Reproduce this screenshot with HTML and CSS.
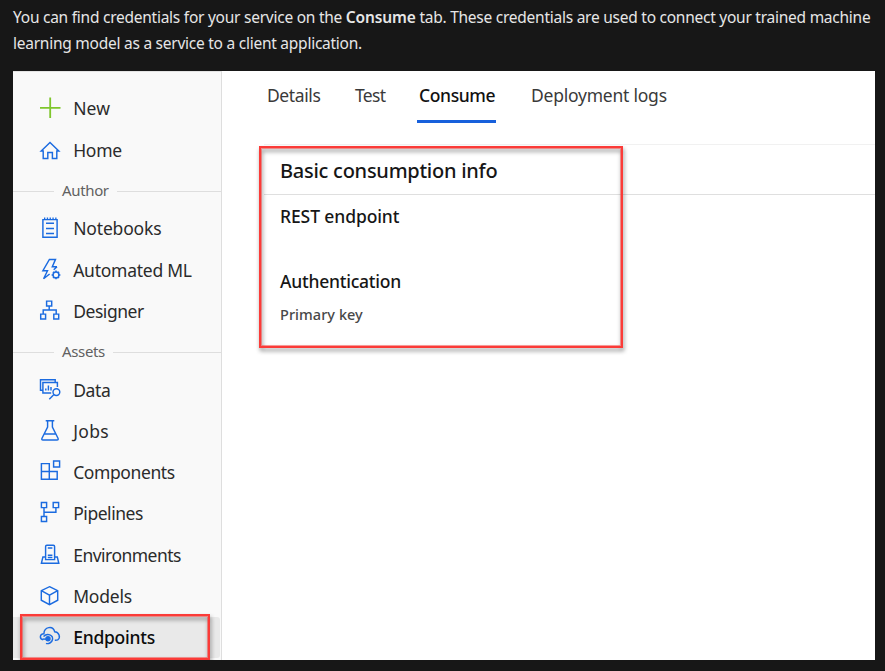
FILE: index.html
```html
<!DOCTYPE html>
<html lang="en">
<head>
<meta charset="utf-8">
<title>Consume credentials</title>
<link rel="stylesheet" href="styles.css">
</head>
<body>
<p class="intro">You can find credentials for your service on the <b>Consume</b> tab. These credentials are used to connect your trained machine<br>learning model as a service to a client application.</p>
<div class="panel">
  <nav class="sidebar">
    <a class="item new"><svg class="plus" viewBox="0 0 24 24"><path d="M12.2 1.5v20.5M2 11.8h20.5"/></svg><span>New</span></a>
    <a class="item home"><svg viewBox="0 0 24 24"><path d="M3.2 13 12 4.6l8.8 8.4h-2v7.5h-4.4v-6H9.8v6H5.2V13z"/></svg><span>Home</span></a>
    <div class="group"><span>Author</span></div>
    <a class="item notebooks"><svg viewBox="0 0 24 24"><path d="M4.9 3.6h14.2v17.7H4.9zM8 7.2h8M8 12.5h8M8 17.5h8"/><path d="M6 2.4h12.5" stroke-width="1.6" stroke-dasharray="1.3 1.5"/></svg><span>Notebooks</span></a>
    <a class="item automl"><svg viewBox="0 0 24 24"><path d="M19 8.8h-4.7l3.2-7.4h-6.1L4.9 12.7h4.6L5.6 20.7l6-4.7M19 8.8l-3.3 3"/><circle cx="18" cy="16.9" r="2.9"/><path stroke-width="1.5" d="M18 14v-1.5M18 19.8v1.5M15.1 16.9h-1.5M20.9 16.9h1.5M16 14.9l-1-1M20 14.9l1-1M16 18.9l-1 1M20 18.9l1 1"/></svg><span>Automated ML</span></a>
    <a class="item designer"><svg viewBox="0 0 24 24"><path d="M8.6 2.1h5.1v4.8H8.6zM2.7 15.1h4.9v4.8H2.7zM15.8 15.1h4.9v4.8h-4.9zM11.2 6.9V11M5.2 15.1V11h13v4.1"/></svg><span>Designer</span></a>
    <div class="group"><span>Assets</span></div>
    <a class="item data"><svg viewBox="0 0 24 24"><path d="M17.2 4.3V1.8H2.5v10.5h2.4M19.4 9V4.4H4.9v10.5h8.3M7.8 12.4v-2M10.4 12.4V7.6M13 12.4V9"/><circle cx="18.4" cy="14.1" r="3.4"/><path d="m15.9 16.6-4.6 4.6"/></svg><span>Data</span></a>
    <a class="item jobs"><svg viewBox="0 0 24 24"><path d="M7.7 1.8h8.6M9.6 1.8v6.4L4 19.2q-.7 1.8 1 1.8h14q1.7 0 1-1.8L14.4 8.2V1.8M6.5 15h11"/></svg><span>Jobs</span></a>
    <a class="item components"><svg viewBox="0 0 24 24"><path d="M3.4 3.6h7.9v15.6H3.4zM3.4 11.4h15.8v7.8h-7.9M15.6 1h6v6h-6z"/></svg><span>Components</span></a>
    <a class="item pipelines"><svg viewBox="0 0 24 24"><path d="M3.4 1.4h5.2v5.2H3.4zM15.2 1.4h5.4v5.2h-5.4zM3.4 15.4h5.2v5.2H3.4zM6 6.6v8.8M17.9 6.6v4.7H6"/></svg><span>Pipelines</span></a>
    <a class="item environments"><svg viewBox="0 0 24 24"><path d="M7.6 16.6V3.4q0-1.2 1.2-1.2h6.6q1.2 0 1.2 1.2v13.2zM9.8 5h4.6M9.8 12.2h4.6M9.8 14.5h4.6M7.4 14H4.9l-1.5 6.3h17.4L19.3 14h-2.5"/></svg><span>Environments</span></a>
    <a class="item models"><svg viewBox="0 0 24 24"><path d="m11.5 2.7 8.2 4v9.5l-8.2 4.4-8.2-4.4V6.7zM3.3 6.7l8.2 4.4 8.2-4.4M11.5 11.1v9.5"/></svg><span>Models</span></a>
    <a class="item endpoints"><svg viewBox="0 0 24 24"><path d="M5.2 14.7C1.2 14 1.5 8.8 5.9 8.7 6.2 1.6 15 .3 16.7 6.7c4.3.2 6.3 6 3 8.2-1 .5-2 .4-2.9.4M5.5 11.5c4-4 9.8-1.5 9 3-.6 3.3-4.2 4.8-6.5 3.8"/><circle cx="10" cy="13.8" r="2" fill="currentColor"/><path d="M4.8 14.1H10"/></svg><span>Endpoints</span></a>
  </nav>
  <main class="main">
    <div class="tabs">
      <a class="tab details">Details</a>
      <a class="tab test">Test</a>
      <a class="tab consume">Consume</a>
      <a class="tab logs">Deployment logs</a>
    </div>
    <h2>Basic consumption info</h2>
    <h3 class="rest">REST endpoint</h3>
    <h3 class="auth">Authentication</h3>
    <p class="key">Primary key</p>
  </main>
  <div class="mark mark-info"></div>
  <div class="mark mark-endpoints"></div>
</div>
</body>
</html>
```
FILE: styles.css
```css
* { box-sizing: border-box; }
body {
  margin: 0;
  padding: 4px 10px 0 13px;
  height: 671px;
  overflow: hidden;
  background: #171717;
  font-family: "Noto Sans", "Open Sans", sans-serif;
}
.intro {
  margin: 0 0 15px;
  height: 52px;
  color: #e6e6e6;
  font-size: 15.5px;
  line-height: 26px;
  letter-spacing: -.25px;
  white-space: nowrap;
}
.intro b { font-weight: 600; letter-spacing: -.15px; }
.panel {
  position: relative;
  display: flex;
  height: 589px;
  background: #fff;
  overflow: hidden;
}
.sidebar {
  width: 209px;
  padding-top: 15.8px;
  background: #f9f9f9;
  border-top: 1px solid #e4e4e4;
  border-right: 1px solid #dedede;
  flex: none;
}
.item {
  display: flex;
  align-items: center;
  height: 41.3px;
  padding-left: 25px;
  gap: 11.2px;
  color: #2b2b2b;
  font-size: 17.5px;
  line-height: 24px;
  white-space: nowrap;
}
.item svg {
  width: 24px;
  height: 24px;
  flex: none;
  fill: none;
  color: #1b6be0;
  stroke: currentColor;
  stroke-width: 1.45;
}
.item svg.plus { stroke: #7fc62c; stroke-width: 1.8; }
.new { letter-spacing: .1px; }
.home { letter-spacing: -.3px; }
.notebooks { letter-spacing: -.17px; }
.automl { letter-spacing: -.26px; }
.designer { letter-spacing: -.45px; }
.data { letter-spacing: -.4px; }
.jobs { letter-spacing: .3px; }
.components { letter-spacing: -.4px; }
.pipelines { letter-spacing: -.45px; }
.environments { letter-spacing: -.52px; }
.models { letter-spacing: -.2px; }
.endpoints {
  margin-right: 1px;
  background: #e9e9e9;
  border-radius: 0 3px 3px 0;
  color: #0c0c0c;
  font-weight: 500;
  letter-spacing: -.25px;
}
.group {
  display: flex;
  align-items: center;
  gap: 8px;
  height: 37.3px;
  padding-top: 4.5px;
  color: #616161;
  font-size: 15px;
  line-height: 20px;
  letter-spacing: -.35px;
}
.group span { margin-bottom: 2px; }
.group::before, .group::after { content: ""; height: 1px; background: #dedede; }
.group::before { width: 41px; }
.group::after { flex: 1; }
.main { flex: 1; }
.tabs {
  display: flex;
  height: 73px;
  padding: 12px 0 0 45px;
}
.tab {
  height: 40px;
  color: #3a3a3a;
  font-size: 17.5px;
  line-height: 24px;
  white-space: nowrap;
}
.details { width: 88px; letter-spacing: -.4px; }
.test { width: 62px; letter-spacing: -.65px; }
.consume {
  width: 79px;
  padding-left: 2px;
  margin-right: 35px;
  border-bottom: 3px solid #1760dc;
  color: #111;
  font-weight: 500;
  letter-spacing: -.38px;
}
.logs { letter-spacing: -.23px; }
h2, h3, .key { margin: 0 0 0 58px; line-height: 24px; color: #161616; font-weight: 500; }
h2 {
  margin-left: 42px;
  padding-left: 16px;
  height: 51px;
  border-top: 1px solid #f1f1f1;
  border-bottom: 1px solid #dfdfdf;
  font-size: 20px;
  line-height: 52px;
  letter-spacing: -.26px;
}
h3 { font-size: 17.5px; }
.rest { margin-top: 9px; letter-spacing: -.1px; }
.auth { margin-top: 41px; letter-spacing: -.23px; }
.key { margin-top: 9px; font-size: 14.5px; color: #484848; letter-spacing: .05px; }
.mark {
  position: absolute;
  border: 2px solid #fb3b38;
  box-shadow: inset 0 0 0 1px rgba(251, 59, 56, .5);
  filter: drop-shadow(1px 3px 2px rgba(0, 0, 0, .45));
}
.mark-info { left: 246px; top: 75px; width: 364px; height: 202px; }
.mark-endpoints { left: 7px; top: 543px; width: 190px; height: 46px; }
```
